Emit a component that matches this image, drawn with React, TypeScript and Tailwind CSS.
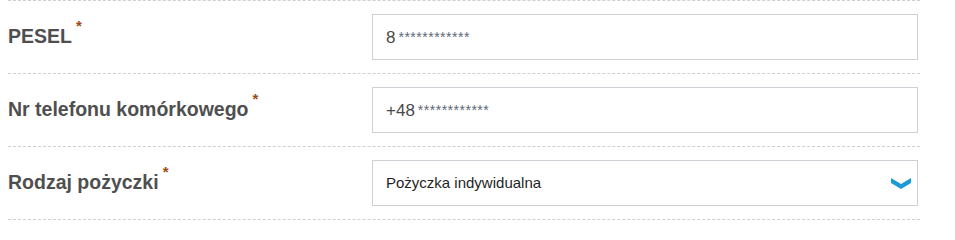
import type { ReactNode } from "react";

function Label({ children }: { children: ReactNode }) {
  return (
    <div className="w-[364px] shrink-0 flex items-start text-[19.5px] font-bold leading-none text-[#4f4f4f]">
      <span>{children}</span>
      <span className="ml-[4px] relative -top-[9px] text-[15px] text-[#9c4b14]">*</span>
    </div>
  );
}

function MaskedInput({ prefix }: { prefix: string }) {
  return (
    <div className="w-[546px] h-[46px] border border-[#cdd1d5] bg-white flex items-center pl-[13px]">
      <span className="text-[17px] text-[#4a4a4a] leading-none">{prefix}</span>
      <span className="ml-[3px] text-[14px] text-[#5d6877] leading-none tracking-[0.5px]">
        ************
      </span>
    </div>
  );
}

function Row({ children }: { children: ReactNode }) {
  return (
    <div className="flex items-center py-[13px] border-t border-dashed border-[#cfcfcf]">
      {children}
    </div>
  );
}

export default function App() {
  return (
    <div className="w-[955px] h-[223px] bg-white [font-family:'Liberation_Sans',Arial,sans-serif]">
      <div className="ml-2 w-[912px] border-b border-dashed border-[#cfcfcf]">
        <Row>
          <Label>PESEL</Label>
          <MaskedInput prefix="8" />
        </Row>
        <Row>
          <Label>Nr telefonu komórkowego</Label>
          <MaskedInput prefix="+48" />
        </Row>
        <Row>
          <Label>Rodzaj pożyczki</Label>
          <div className="w-[546px] h-[46px] border border-[#cdd1d5] bg-white flex items-center justify-between pl-[13px] pr-[6px]">
            <span className="text-[15px] text-[#1f1f1f]">Pożyczka indywidualna</span>
            <svg width="20" height="11" viewBox="0 0 20 11" aria-hidden>
              <path d="M0 0 L10 6 L20 0 L20 5 L10 11 L0 5 Z" fill="#1b9ad6" />
            </svg>
          </div>
        </Row>
      </div>
    </div>
  );
}
